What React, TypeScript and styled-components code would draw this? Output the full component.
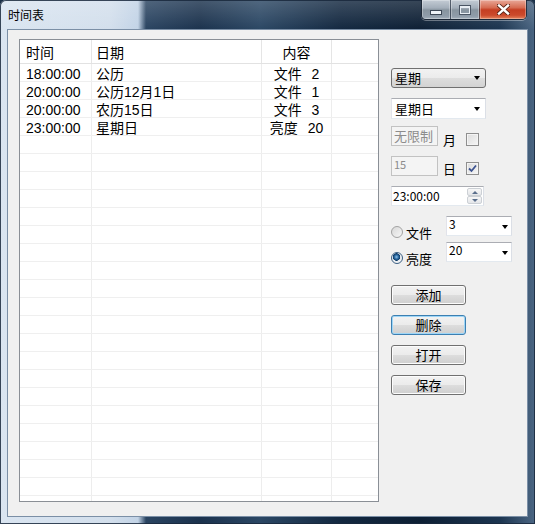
import * as React from 'react'
import styled, { createGlobalStyle, css } from 'styled-components'

type Entry = {
  time: string
  date: string
  content: string
}

const entries: Entry[] = [
  { time: '18:00:00', date: '公历', content: '文件 2' },
  { time: '20:00:00', date: '公历12月1日', content: '文件 1' },
  { time: '20:00:00', date: '农历15日', content: '文件 3' },
  { time: '23:00:00', date: '星期日', content: '亮度 20' },
]

const EMPTY_ROWS = 22

const GlobalStyle = createGlobalStyle`
  html, body {
    margin: 0;
    padding: 0;
  }

  body {
    width: 535px;
    height: 524px;
    overflow: hidden;
    background: #1a3048;
    font-family: "Noto Sans CJK SC", "Liberation Sans", sans-serif;
    color: #000;
  }
`

const Window = styled.div`
  width: 535px;
  height: 524px;
  display: flex;
  flex-direction: column;
  border-radius: 6px 6px 0 0;
  overflow: hidden;
  box-shadow: inset 0 0 0 1px rgba(25, 40, 60, 0.85);
  background:
    linear-gradient(rgba(255, 255, 255, 0.18), rgba(255, 255, 255, 0) 30px),
    linear-gradient(90deg, #dae5f1 0, #d3dfec 110px, #c2d3e6 138px, #2a4461 146px, #1b324d 200px, #2b4764 260px, #132840 340px, #0d1f34 420px, #1c3550 500px, #4b6683 535px);
`

const TitleBar = styled.div`
  height: 29px;
  display: flex;
  align-items: flex-start;
  padding: 0 8px;
`

const Title = styled.div`
  font-size: 12px;
  line-height: 16px;
  padding-top: 7px;
`

const Caption = styled.div`
  display: flex;
  margin-left: auto;
  height: 20px;
  box-sizing: border-box;
  border: 1px solid rgba(28, 38, 52, 0.85);
  border-top: none;
  border-radius: 0 0 5px 5px;
  overflow: hidden;
  box-shadow: 0 1px 0 rgba(255, 255, 255, 0.35);
`

const CaptionButton = styled.div<{ $w: number; $close?: boolean }>`
  width: ${({ $w }) => $w}px;
  display: flex;
  align-items: center;
  justify-content: center;
  box-shadow: inset 0 0 0 1px rgba(255, 255, 255, 0.3);
  background: ${({ $close }) =>
    $close
      ? 'linear-gradient(#e9a898, #d66c52 40%, #c53e22 52%, #cc4a2c 80%, #e5855f)'
      : 'linear-gradient(#c4ccd5, #a3aeba 42%, #87949f 52%, #8f9ca9 85%, #a4b0bc)'};

  & + & {
    border-left: 1px solid rgba(40, 50, 65, 0.7);
  }
`

const MinGlyph = styled.div`
  width: 10px;
  height: 3px;
  margin-top: 6px;
  background: #eef3f8;
  border: 1px solid #3d4856;
`

const MaxGlyph = styled.div`
  width: 8px;
  height: 5px;
  border: 1px solid #e8eef4;
  border-top-width: 2px;
  box-shadow: 0 0 0 1px #4a5564;
`

const Client = styled.div`
  flex: 1;
  margin: 0 7px 7px;
  border: 1px solid #7b8fa6;
  background: #f0f0f0;
  display: flex;
  align-items: flex-start;
  padding: 9px 0 0 11px;
`

const ListView = styled.div`
  width: 360px;
  height: 463px;
  flex-shrink: 0;
  box-sizing: border-box;
  border: 1px solid #8a8f96;
  background: #fff;
  overflow: hidden;
  font-family: "Liberation Sans", "Noto Sans CJK SC", sans-serif;
`

const columns = css`
  display: grid;
  grid-template-columns: 72px 170px 70px 1fr;
`

const HeaderRow = styled.div`
  ${columns}
  height: 24px;
  box-sizing: border-box;
  border-bottom: 1px solid #e2e2e2;
`

const HeaderCell = styled.div<{ $pad?: number; $center?: boolean }>`
  font-size: 14px;
  line-height: 17px;
  padding: 5px 0 0 ${({ $pad }) => $pad ?? 0}px;
  text-align: ${({ $center }) => ($center ? 'center' : 'left')};
  border-right: 1px solid #e5e5e5;

  &:last-child {
    border-right: none;
  }
`

const BodyRow = styled.div`
  ${columns}
  height: 18px;
  box-sizing: border-box;
  border-bottom: 1px solid #efefef;
`

const Cell = styled.div<{ $pad?: number; $center?: boolean }>`
  font-size: 14px;
  line-height: 14px;
  padding: 3px 0 0 ${({ $pad }) => $pad ?? 0}px;
  white-space: nowrap;
  word-spacing: 6px;
  text-align: ${({ $center }) => ($center ? 'center' : 'left')};
  border-right: 1px solid #ededed;

  &:last-child {
    border-right: none;
  }
`

const Side = styled.div`
  margin-left: 12px;
  padding-top: 29px;
  display: flex;
  flex-direction: column;
  align-items: flex-start;
`

const Row = styled.div<{ $mt?: number }>`
  display: flex;
  align-items: flex-start;
  margin-top: ${({ $mt }) => $mt ?? 0}px;
`

const Arrow = styled.span`
  width: 0;
  height: 0;
  border-left: 3.5px solid transparent;
  border-right: 3.5px solid transparent;
  border-top: 4px solid #000;
`

const DropList = styled.div`
  width: 95px;
  height: 20px;
  box-sizing: border-box;
  border: 1px solid #707070;
  border-radius: 3px;
  background: linear-gradient(#f2f2f2, #ebebeb 50%, #dddddd 51%, #d3d3d3);
  display: flex;
  align-items: center;
  justify-content: space-between;
  padding: 0 5px 0 3px;
  font-size: 13px;
  line-height: 18px;
`

const Combo = styled.div<{ $w: number; $h: number; $small?: boolean }>`
  width: ${({ $w }) => $w}px;
  height: ${({ $h }) => $h}px;
  box-sizing: border-box;
  border: 1px solid #abadb3;
  border-color: #abadb3 #dbdfe6 #e3e9ef #e2e3ea;
  background: #fff;
  display: flex;
  align-items: ${({ $small }) => ($small ? 'flex-start' : 'center')};
  justify-content: space-between;
  padding: ${({ $small }) => ($small ? '0 3px 0 2px' : '0 5px 0 3px')};
  font-size: ${({ $small }) => ($small ? 12 : 13)}px;
  line-height: ${({ $small }) => ($small ? 14 : 18)}px;

  ${Arrow} {
    align-self: center;
    margin-top: ${({ $small }) => ($small ? 2 : 0)}px;
  }
`

const DisabledBox = styled.div<{ $small?: boolean }>`
  width: 47px;
  height: 20px;
  box-sizing: border-box;
  border: 1px solid #c2c2c2;
  background: #f4f4f4;
  color: #8c8c8c;
  padding-left: 2px;
  font-size: ${({ $small }) => ($small ? 11 : 13)}px;
  line-height: ${({ $small }) => ($small ? 14 : 17)}px;
`

const CheckGroup = styled.div<{ $drop: number }>`
  display: flex;
  align-items: center;
  margin: ${({ $drop }) => $drop}px 0 0 5px;
  height: 13px;
`

const CheckLabel = styled.span`
  width: 23px;
  font-size: 13px;
  line-height: 13px;
`

const CheckBox = styled.div`
  width: 13px;
  height: 13px;
  box-sizing: border-box;
  border: 1px solid #8f8f8f;
  background: linear-gradient(135deg, #dcdcdc, #f6f6f6);
  box-shadow: inset 0 0 0 1px #f4f4f4;
  display: flex;
  align-items: center;
  justify-content: center;
`

const Spin = styled.div`
  width: 93px;
  height: 20px;
  box-sizing: border-box;
  border: 1px solid #abadb3;
  border-color: #abadb3 #dbdfe6 #e3e9ef #e2e3ea;
  background: #fff;
  display: flex;
  align-items: center;
  padding: 0 1px 0 1px;
  font-size: 12px;
`

const SpinText = styled.span`
  flex: 1;
  line-height: 16px;
`

const SpinButtons = styled.div`
  width: 15px;
  height: 16px;
  display: flex;
  flex-direction: column;
`

const SpinButton = styled.div`
  flex: 1;
  box-sizing: border-box;
  border: 1px solid #ccd0d5;
  border-radius: 2px;
  background: linear-gradient(#f7f7f7, #e4e6e9);
  display: flex;
  align-items: center;
  justify-content: center;
`

const SpinArrow = styled.span<{ $up?: boolean }>`
  width: 0;
  height: 0;
  border-left: 3px solid transparent;
  border-right: 3px solid transparent;
  ${({ $up }) => ($up ? 'border-bottom: 3px solid #5a6e8c;' : 'border-top: 3px solid #5a6e8c;')}
`

const OptionRow = styled.div<{ $mt: number }>`
  display: grid;
  grid-template-columns: 55px 66px;
  height: 20px;
  align-items: start;
  margin-top: ${({ $mt }) => $mt}px;
`

const RadioGroup = styled.div`
  display: flex;
  align-items: center;
  gap: 3px;
  margin-top: 10px;
  height: 12px;
  font-size: 13px;
  line-height: 13px;
`

const Radio = styled.span<{ $on?: boolean }>`
  width: 12px;
  height: 12px;
  box-sizing: border-box;
  border-radius: 50%;
  border: 1px solid ${({ $on }) => ($on ? '#3b5f83' : '#a2a2a2')};
  background: ${({ $on }) =>
    $on
      ? 'radial-gradient(circle at 45% 40%, #8fc3ea 0, #2c6aa2 2px, #0d3a66 3.5px, #e6eaee 4px, #f4f4f4 6px)'
      : 'linear-gradient(135deg, #d8d8d8, #f6f6f6)'};
`

const Button = styled.div<{ $focus?: boolean; $mt: number }>`
  width: 75px;
  height: 20px;
  box-sizing: border-box;
  margin-top: ${({ $mt }) => $mt}px;
  border: 1px solid ${({ $focus }) => ($focus ? '#3c7fb1' : '#707070')};
  border-radius: 3px;
  background: linear-gradient(#f2f2f2, #ebebeb 50%, #dddddd 51%, #cfcfcf);
  box-shadow: ${({ $focus }) => ($focus ? 'inset 0 0 0 1px #9ed6f7' : 'inset 0 0 0 1px #fcfcfc')};
  display: flex;
  align-items: center;
  justify-content: center;
  font-size: 13px;
  line-height: 18px;
`

const CloseGlyph: React.FC = () => (
  <svg width="13" height="11" viewBox="0 0 13 11">
    <path d="M2 1.5 L11 9.5 M11 1.5 L2 9.5" stroke="#5a2416" strokeWidth="4.2" strokeLinecap="square" />
    <path d="M2 1.5 L11 9.5 M11 1.5 L2 9.5" stroke="#fff" strokeWidth="2.4" strokeLinecap="square" />
  </svg>
)

const Check: React.FC = () => (
  <svg width="9" height="9" viewBox="0 0 9 9">
    <path d="M1 4.5 L3.5 7 L8 1.5" fill="none" stroke="#3d5390" strokeWidth="1.8" />
  </svg>
)

const App: React.FC = () => {
  const buttons = ['添加', '删除', '打开', '保存']

  return (
    <>
      <GlobalStyle />
      <Window>
        <TitleBar>
          <Title>时间表</Title>
          <Caption>
            <CaptionButton $w={28}>
              <MinGlyph />
            </CaptionButton>
            <CaptionButton $w={28}>
              <MaxGlyph />
            </CaptionButton>
            <CaptionButton $w={46} $close>
              <CloseGlyph />
            </CaptionButton>
          </Caption>
        </TitleBar>

        <Client>
          <ListView>
            <HeaderRow>
              <HeaderCell $pad={6}>时间</HeaderCell>
              <HeaderCell $pad={4}>日期</HeaderCell>
              <HeaderCell $center>内容</HeaderCell>
              <HeaderCell />
            </HeaderRow>
            {entries.map((entry, i) => (
              <BodyRow key={i}>
                <Cell $pad={6}>{entry.time}</Cell>
                <Cell $pad={4}>{entry.date}</Cell>
                <Cell $center>{entry.content}</Cell>
                <Cell />
              </BodyRow>
            ))}
            {Array.from({ length: EMPTY_ROWS }).map((_, i) => (
              <BodyRow key={`empty-${i}`}>
                <Cell />
                <Cell />
                <Cell />
                <Cell />
              </BodyRow>
            ))}
          </ListView>

          <Side>
            <DropList>
              <span>星期</span>
              <Arrow />
            </DropList>

            <Row $mt={10}>
              <Combo $w={95} $h={21}>
                <span>星期日</span>
                <Arrow />
              </Combo>
            </Row>

            <Row $mt={7}>
              <DisabledBox>无限制</DisabledBox>
              <CheckGroup $drop={7}>
                <CheckLabel>月</CheckLabel>
                <CheckBox />
              </CheckGroup>
            </Row>

            <Row $mt={10}>
              <DisabledBox $small>15</DisabledBox>
              <CheckGroup $drop={6}>
                <CheckLabel>日</CheckLabel>
                <CheckBox>
                  <Check />
                </CheckBox>
              </CheckGroup>
            </Row>

            <Row $mt={10}>
              <Spin>
                <SpinText>23:00:00</SpinText>
                <SpinButtons>
                  <SpinButton>
                    <SpinArrow $up />
                  </SpinButton>
                  <SpinButton>
                    <SpinArrow />
                  </SpinButton>
                </SpinButtons>
              </Spin>
            </Row>

            <OptionRow $mt={10}>
              <RadioGroup>
                <Radio />
                <span>文件</span>
              </RadioGroup>
              <Combo $w={66} $h={20} $small>
                <span>3</span>
                <Arrow />
              </Combo>
            </OptionRow>

            <OptionRow $mt={6}>
              <RadioGroup>
                <Radio $on />
                <span>亮度</span>
              </RadioGroup>
              <Combo $w={66} $h={20} $small>
                <span>20</span>
                <Arrow />
              </Combo>
            </OptionRow>

            {buttons.map((label, i) => (
              <Button key={label} $mt={i === 0 ? 23 : 10} $focus={label === '删除'}>
                {label}
              </Button>
            ))}
          </Side>
        </Client>
      </Window>
    </>
  )
}

export default App
